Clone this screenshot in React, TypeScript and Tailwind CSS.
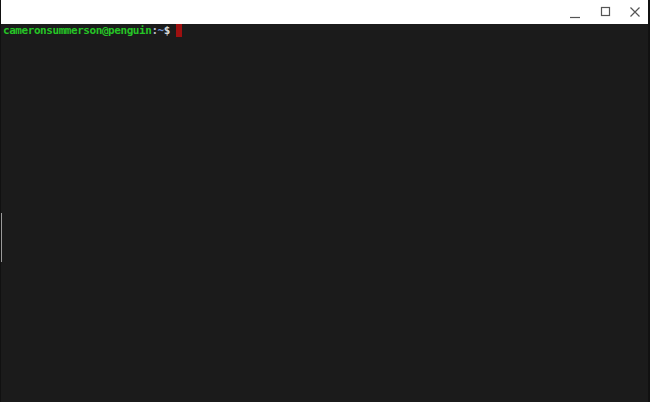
import React from "react";

export default function App() {
  return (
    <div className="relative w-[650px] h-[402px] bg-[#1b1b1b] flex flex-col border-l border-r-2 border-[#111]">
      <div className="h-[24px] bg-white flex justify-end items-center shrink-0">
        <svg width="12" height="12" viewBox="0 0 12 12" className="mr-[19px] mt-[2px]">
          <path d="M1 10.5H11" stroke="#555" strokeWidth="1.2" />
        </svg>
        <svg width="12" height="12" viewBox="0 0 12 12" className="mr-[17px]">
          <rect x="1.5" y="1.5" width="8" height="8" fill="none" stroke="#555" strokeWidth="1.2" />
        </svg>
        <svg width="12" height="12" viewBox="0 0 12 12" className="mr-[7px]">
          <path d="M1.5 1.5L10.5 10.5M10.5 1.5L1.5 10.5" stroke="#555" strokeWidth="1.2" />
        </svg>
      </div>
      <div
        className="pl-[2px] text-[11px] leading-[13px] tracking-[-0.44px] font-bold flex items-center whitespace-pre"
        style={{ fontFamily: '"DejaVu Sans Mono", "Liberation Mono", monospace' }}
      >
        <span className="text-[#26c426]">cameronsummerson@penguin</span>
        <span className="text-[#b8bcc8]">:</span>
        <span className="text-[#6f8fd8]">~</span>
        <span className="text-[#d8d8d8]">{"$ "}</span>
        <span className="inline-block w-[6px] h-[13px] bg-[#9e1010]"></span>
      </div>
      <div className="absolute left-0 top-[213px] w-px h-[49px] bg-[#9a9a9a]"></div>
    </div>
  );
}
